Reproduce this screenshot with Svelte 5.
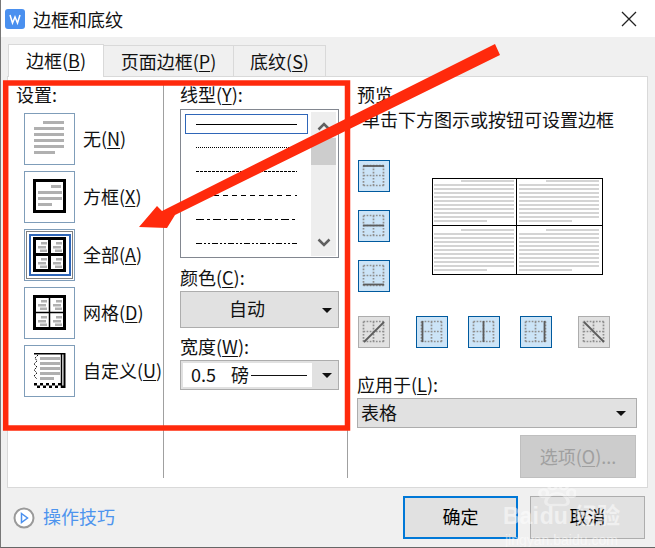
<script>
  const settings = [
    { label: '无', key: 'N', kind: 'none' },
    { label: '方框', key: 'X', kind: 'box' },
    { label: '全部', key: 'A', kind: 'all' },
    { label: '网格', key: 'D', kind: 'grid' },
    { label: '自定义', key: 'U', kind: 'custom' }
  ];
  const lineStyles = [
    { y: 14, dash: '' },
    { y: 37, dash: '1 1' },
    { y: 61, dash: '3 1' },
    { y: 85, dash: '5 4' },
    { y: 109, dash: '8 3 3 3' },
    { y: 133, dash: '6 2 2 2 2 2' }
  ];
  const quadTops = [2, 51];
  const quadLefts = [2, 87];
  const rows = Array.from({ length: 11 }, (_, i) => i);
</script>

{#snippet dots(mark)}
  <svg class="mini" width="30" height="30" viewBox="0 0 30 30">
    <g stroke="#8f8f8f" stroke-width="1.7" stroke-dasharray="1.7 1.4" fill="none">
      <path d="M4.500 4.500H25M4.500 14.500H25M4.500 24.500H25M4.500 4.500V25M14.500 4.500V25M24.500 4.500V25" />
    </g>
    <path d={mark} stroke="#5c5c5c" stroke-width="1.800" fill="none" />
  </svg>
{/snippet}

{#snippet settingIcon(kind)}
  <svg width="49" height="50" viewBox="0 0 49 50">
    {#if kind === 'none'}
      <g fill="#b0b0b0">
        <rect x="18" y="7" width="21" height="3" />
        {#each [13, 19, 25, 31] as y}<rect x="9" {y} width="30" height="3" />{/each}
        <rect x="9" y="37" width="21" height="3" />
      </g>
    {:else if kind === 'box'}
      <rect x="9.500" y="8.500" width="30" height="31" fill="none" stroke="#000" stroke-width="3" />
      <g fill="#b0b0b0">
        <rect x="26" y="13" width="10" height="3" />
        <rect x="13" y="19" width="24" height="3" />
        <rect x="13" y="25" width="24" height="3" />
        <rect x="13" y="31" width="14" height="3" />
      </g>
    {:else if kind === 'all' || kind === 'grid'}
      {#if kind === 'all'}
        <rect x="1.500" y="1.500" width="46" height="47" fill="none" stroke="#000" stroke-dasharray="1 1" />
        <rect x="5" y="5" width="40" height="40" fill="none" stroke="#2f66b8" stroke-width="2" />
      {/if}
      <rect x="9.500" y="8.500" width="30" height="32" fill="none" stroke="#000" stroke-width="3" />
      <path d="M24.500 9v31M9 24.500h31" stroke="#000" stroke-width={kind === 'all' ? 3 : 1.5} />
      <g fill="#b0b0b0">
        {#each [[13, 12], [28, 12], [13, 28], [28, 28]] as [x, y]}
          <rect x={x + 3} {y} width="6" height="2.500" />
          <rect {x} y={y + 4} width="8" height="2.500" />
          <rect x={x + 2} y={y + 7.500} width="7" height="2.500" />
        {/each}
      </g>
    {:else}
      <path d="M9 7.750h31" stroke="#000" stroke-width="1.500" />
      <path d="M36.500 7v35" stroke="#000" stroke-width="1.500" />
      <path d="M39.500 7v35" stroke="#000" stroke-width="2" />
      <path d="M13 9l-3 3 2 3-3 3 3 3-3 3 3 3-3 3 3 3" fill="none" stroke="#000" stroke-dasharray="1.500 1" />
      <g fill="#000">
        {#each [9, 15, 21, 27, 33] as x}
          <rect {x} y="37" width="3" height="2.500" /><rect x={x + 3} y="39.500" width="3" height="2.500" />
        {/each}
      </g>
      <g fill="#b0b0b0">
        {#each [11, 16, 21, 26] as y}<rect x="15" {y} width="20" height="3" />{/each}
        <rect x="15" y="31" width="14" height="3" />
      </g>
    {/if}
  </svg>
{/snippet}

<div class="dialog">
  <header class="titlebar">
    <svg class="logo" width="20" height="20" viewBox="0 0 20 20">
      <rect width="20" height="20" rx="3" fill="#4a90ef" />
      <path d="M5 6l2.500 8L10 8l2.500 6L15 6" fill="none" stroke="#fff" stroke-width="1.500" />
    </svg>
    <span class="title">边框和底纹</span>
    <svg class="close" width="16" height="16" viewBox="0 0 16 16">
      <path d="M1 1l14 14M15 1L1 15" stroke="#222" stroke-width="1.300" />
    </svg>
  </header>

  <div class="body">
    <nav class="tabs">
      <button class="tab active">边框(<u>B</u>)</button>
      <button class="tab second">页面边框(<u>P</u>)</button>
      <button class="tab third">底纹(<u>S</u>)</button>
    </nav>

    <section class="panel">
      <div class="col col-a">
        <div class="label heading">设置:</div>
        <ul class="settings">
          {#each settings as s}
            <li class="setting">
              <span class="thumb">{@render settingIcon(s.kind)}</span>
              <span class="setting-label">{s.label}(<u>{s.key}</u>)</span>
            </li>
          {/each}
        </ul>
      </div>

      <div class="col col-b">
        <div class="label">线型(<u>Y</u>):</div>
        <div class="listbox">
          <div class="selected"></div>
          <svg class="lines" width="124" height="147" viewBox="0 0 124 147">
            {#each lineStyles as l}
              <path d="M15 {l.y + 0.5}H116" stroke="#000" stroke-width="1" stroke-dasharray={l.dash} />
            {/each}
          </svg>
          <div class="scrollbar">
            <svg class="arrow" width="14" height="9" viewBox="0 0 14 9"><path d="M1.500 7.500L7 2l5.500 5.500" fill="none" stroke="#606060" stroke-width="2.500" /></svg>
            <div class="track-thumb"></div>
            <svg class="arrow down" width="14" height="9" viewBox="0 0 14 9"><path d="M1.500 1.500L7 7l5.500-5.500" fill="none" stroke="#606060" stroke-width="2.500" /></svg>
          </div>
        </div>
        <div class="label color-label">颜色(<u>C</u>):</div>
        <div class="select color">
          <span class="center">自动</span><i class="caret"></i>
        </div>
        <div class="label width-label">宽度(<u>W</u>):</div>
        <div class="select width">
          <span class="white"><span class="num">0.5</span><span>磅</span><span class="rule"></span></span><i class="caret"></i>
        </div>
      </div>

      <div class="col col-c">
        <div class="label">预览</div>
        <div class="label hint">单击下方图示或按钮可设置边框</div>
        <div class="preview-row">
          <div class="side">
            <div class="mini-btn on">{@render dots('M4 5H25')}</div>
            <div class="mini-btn on">{@render dots('M4 14.500H25')}</div>
            <div class="mini-btn on">{@render dots('M4 23.500H25')}</div>
          </div>
          <svg class="diagram" width="172" height="98" viewBox="0 0 172 98">
            <rect x=".5" y=".5" width="170" height="96" fill="#fff" stroke="#000" />
            <g fill="#d4d4d4">
              {#each quadTops as top}
                {#each quadLefts as x}
                  {#each rows as r}
                    <rect
                      x={r === 0 ? x + 27 : x}
                      y={top + r * 4}
                      width={r === 0 || r === 10 ? 53 : 80}
                      height="2"
                    />
                  {/each}
                {/each}
              {/each}
            </g>
            <path d="M84.500 0V97M0 47.500H171" stroke="#000" />
          </svg>
        </div>
        <div class="bottom-btns">
          <div class="mini-btn off">{@render dots('M5 25L25 5')}</div>
          <div class="mini-btn on first">{@render dots('M5.500 4V25')}</div>
          <div class="mini-btn on">{@render dots('M14.500 4V25')}</div>
          <div class="mini-btn on">{@render dots('M23.500 4V25')}</div>
          <div class="mini-btn off last">{@render dots('M5 5L25 25')}</div>
        </div>
        <div class="label apply-label">应用于(<u>L</u>):</div>
        <div class="select apply"><span>表格</span><i class="caret"></i></div>
        <button class="options">选项(<u>O</u>)...</button>
      </div>
    </section>

    <footer class="footer">
      <a class="tips" href="#tips">
        <svg width="22" height="22" viewBox="0 0 22 22">
          <circle cx="11" cy="11" r="9.500" fill="#fff" stroke="#9a9a9a" stroke-width="2" />
          <path d="M8.500 6.500L14.500 11l-6 4.500z" fill="none" stroke="#4a90ef" stroke-width="1.500" />
        </svg>
        <span class="tips-text">操作技巧</span>
      </a>
      <div class="actions">
        <button class="action primary">确定</button>
        <button class="action">取消</button>
      </div>
    </footer>
  </div>

  <div class="watermark">
    <svg class="paw" width="38" height="28" viewBox="0 0 34 36" preserveAspectRatio="none">
      <g fill="none" stroke="#fff" stroke-width="3" opacity=".85">
        <ellipse cx="5" cy="17" rx="3.500" ry="5" />
        <ellipse cx="13" cy="7" rx="3.500" ry="5" />
        <ellipse cx="23" cy="7" rx="3.500" ry="5" />
        <ellipse cx="30" cy="17" rx="3.500" ry="5" />
        <path d="M17 17c-5 0-10 6-10 11 0 6 6 4 10 4s10 2 10-4c0-5-5-11-10-11z" />
      </g>
    </svg>
    <div class="wm-main">Bai<span class="wm-du">du</span> 经验</div>
    <div class="wm-sub">jingyan.baidu.com</div>
  </div>

  <svg class="annotation" width="655" height="548" viewBox="0 0 655 548">
    <rect x="5.700" y="83" width="341.800" height="345" fill="none" stroke="#ff2a0c" stroke-width="5.500" />
    <path d="M500 55L175 215l-8 13-28-1 18-21 5 5L495 44z" fill="#ff2a0c" />
  </svg>
</div>

<style>
  :global(body) { margin: 0; background: #f0f0f0; }
  * { box-sizing: border-box; }
  .dialog {
    position: relative;
    width: 655px;
    height: 548px;
    overflow: hidden;
    font: 400 18px/20px "Noto Sans CJK SC", "Noto Sans", sans-serif;
    color: #111;
    background: #f0f0f0;
    border-left: 1px solid #777;
    border-bottom: 1px solid #666;
  }
  u { text-underline-offset: 2px; text-decoration-thickness: 1px; }
  .titlebar {
    display: flex;
    align-items: center;
    height: 37px;
    background: #fff;
    padding-left: 4px;
  }
  .title { margin-left: 8px; }
  .close { margin-left: auto; margin-right: 18px; }
  .logo { flex: none; }
  .body { padding: 7px 7px 0 6px; }
  .tabs { display: flex; height: 32px; position: relative; z-index: 1; align-items: flex-start; }
  .tab {
    font: inherit;
    color: inherit;
    height: 31px;
    margin-top: 1px;
    padding: 0;
    background: #f0f0f0;
    border: 1px solid #d9d9d9;
    border-bottom: 0;
    border-left: 0;
  }
  .tab.active {
    width: 96px;
    height: 33px;
    margin: 0 0 0 1px;
    background: #fff;
    border-left: 1px solid #d9d9d9;
    padding-bottom: 2px;
  }
  .tab.second { width: 130px; }
  .tab.third { width: 92px; }
  .panel {
    display: grid;
    grid-template-columns: 156px 184px 1fr;
    height: 412px;
    padding-top: 8px;
    background: #fff;
    border: 1px solid #d9d9d9;
  }
  .col { height: 393px; }
  .col-a { padding-left: 9px; border-right: 1px solid #a0a0a0; }
  .col-b { padding-left: 16px; border-right: 1px solid #a0a0a0; }
  .col-c { padding-left: 9px; }
  .label { height: 20px; line-height: 18px; white-space: nowrap; }
  .heading { margin-left: -1px; }
  .settings {
    list-style: none;
    margin: 8px 0 0 7px;
    padding: 0;
    display: flex;
    flex-direction: column;
    gap: 6px;
  }
  .setting { display: flex; align-items: center; gap: 8px; white-space: nowrap; }
  .setting-label { padding-bottom: 2px; }
  .thumb {
    display: block;
    width: 51px;
    height: 52px;
    border: 1px solid #7f9db9;
    background: #fff;
    flex: none;
  }
  .thumb svg { display: block; }
  .listbox {
    position: relative;
    display: flex;
    width: 159px;
    height: 149px;
    margin-top: 4px;
    border: 1px solid #828790;
  }
  .selected {
    position: absolute;
    left: 4px;
    top: 4px;
    width: 123px;
    height: 20px;
    border: 1px solid #2f66b8;
  }
  .lines { flex: none; margin-right: 6px; }
  .scrollbar {
    position: relative;
    width: 25px;
    height: 144px;
    margin-top: 2px;
    background: #eee;
  }
  .arrow { position: absolute; left: 6px; top: 10px; }
  .arrow.down { top: 126px; }
  .track-thumb { position: absolute; left: 0; right: 0; top: 26px; height: 27px; background: #cdcdcd; }
  .color-label { margin-top: 10px; }
  .width-label { margin-top: 9px; }
  .select {
    position: relative;
    display: flex;
    align-items: center;
    margin-top: 3px;
    background: #e1e1e1;
    border: 1px solid #adadad;
  }
  .select > span { margin-bottom: 2px; }
  .caret {
    position: absolute;
    right: 6px;
    top: 50%;
    margin-top: -2px;
    width: 0;
    height: 0;
    border: 5px solid transparent;
    border-top: 5px solid #111;
    border-bottom: 0;
  }
  .select.color { width: 159px; height: 37px; }
  .select.color .center { margin-bottom: 3px; }
  .center { flex: 1; text-align: center; padding-right: 25px; }
  .select.width { width: 159px; height: 30px; }
  .select.width .white { margin-bottom: 0; padding-bottom: 2px; }
  .white {
    display: flex;
    align-items: center;
    width: 129px;
    height: 24px;
    margin-left: 2px;
    padding-left: 8px;
    background: #fff;
  }
  .num { width: 40px; }
  .rule { width: 56px; border-top: 1px solid #111; margin-left: 2px; margin-top: 2px; }
  .hint { margin-top: 5px; padding-left: 5px; }
  .preview-row { display: flex; margin-top: 30px; }
  .side { display: flex; flex-direction: column; gap: 18px; margin-left: 1px; }
  .mini-btn { width: 32px; height: 32px; border: 1px solid; }
  .mini-btn.on { background: #cce4f7; border-color: #005a9e; }
  .mini-btn.off { background: #e1e1e1; border-color: #adadad; }
  .mini { display: block; }
  .diagram { margin: 18px 0 0 42px; flex: none; }
  .bottom-btns { display: flex; gap: 20px; margin: 24px 0 0 1px; }
  .first { margin-left: 6px; }
  .last { margin-left: 6px; }
  .apply-label { margin-top: 27px; }
  .select.apply { width: 280px; height: 30px; padding-left: 3px; }
  .select.apply .caret { right: 10px; }
  .options {
    display: block;
    width: 116px;
    height: 43px;
    margin: 7px 0 0 163px;
    padding: 0 0 2px;
    font: inherit;
    color: #a0a0a0;
    background: #ccc;
    border: 1px solid #bfbfbf;
  }
  .footer { display: flex; align-items: center; justify-content: space-between; height: 59px; }
  .tips {
    display: flex;
    align-items: center;
    gap: 8px;
    margin-left: 6px;
    color: #4d94ee;
    text-decoration: none;
  }
  .tips-text { margin-bottom: 3px; }
  .actions { display: flex; gap: 12px; margin-right: 3px; }
  .action {
    width: 115px;
    height: 43px;
    padding: 0 0 3px;
    font: inherit;
    color: #000;
    background: #e1e1e1;
    border: 1px solid #adadad;
  }
  .action.primary { border: 2px solid #0078d7; }
  .watermark {
    position: absolute;
    left: 502px;
    top: 478px;
    width: 150px;
    height: 70px;
    color: #fff;
    opacity: .5;
    pointer-events: none;
  }
  .paw { position: absolute; left: 35px; top: 2px; }
  .wm-main { position: absolute; left: 0; top: 25px; font: 700 23px/26px "Liberation Sans", "Noto Sans CJK SC", sans-serif; white-space: nowrap; }
  .wm-du { padding-left: 1px; }
  .wm-sub { position: absolute; left: 2px; top: 54px; font: 400 14px/16px "Liberation Sans", sans-serif; white-space: nowrap; }
  .annotation { position: absolute; left: -1px; top: 0; pointer-events: none; }
</style>
